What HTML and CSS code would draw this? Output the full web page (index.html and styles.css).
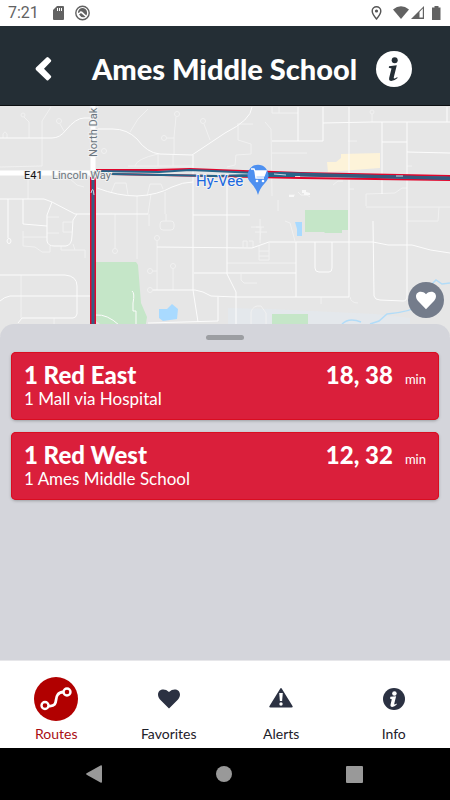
FILE: index.html
```html
<!DOCTYPE html>
<html lang="en">
<head>
<meta charset="utf-8">
<meta name="viewport" content="width=device-width, initial-scale=1">
<title>Ames Middle School</title>
<link rel="stylesheet" href="styles.css">
</head>
<body>
<div class="status">
  <span class="clock">7:21</span>
  <svg class="status-left" width="40" height="16" viewBox="52 5 40 16" aria-hidden="true">
    <path d="M57 6h6q1 0 1 1v12q0 1-1 1h-9q-1 0-1-1v-9z" fill="#626262"/>
    <path d="M57.500 8v3M59.500 8v3M61.500 8v3" stroke="#fff" stroke-width="1"/>
    <circle cx="82.500" cy="13" r="6.700" fill="none" stroke="#626262" stroke-width="1.400"/>
    <path d="M78 13a4.500 4.500 0 0 1 9-1q.3 2-.7 3.500L82 11.500q-2-1-2.500 1z" fill="#626262"/>
    <path d="M79 14.500l2-1.500 4.500 3.800q-4 1.700-6.500-2.300z" fill="#626262"/>
  </svg>
  <svg class="status-right" width="72" height="16" viewBox="371 5 72 16" aria-hidden="true">
    <path d="M377.500 19q-4.300-5-4.300-8a4.300 4.300 0 0 1 8.600 0q0 3-4.300 8z" fill="none" stroke="#555" stroke-width="1.400"/>
    <circle cx="377.500" cy="11" r="1.600" fill="#555"/>
    <path d="M394 9.500q8-6.500 16 0L402 19z" fill="#626262"/>
    <path d="M412 19l13-13v13z" fill="#626262"/><path d="M420.500 12l3.300-3.500v9h-3.300z" fill="#fff"/>
    <path d="M433 7.500h2.500V6h4v1.500h2V20H433z" fill="#626262"/>
  </svg>
</div>

<header class="header">
  <button class="icon-button" aria-label="Back">
    <svg width="18" height="26" viewBox="0 0 18 26"><path d="M11.500 1.500q1-1 2 0l2.300 2.300q1 1 0 2L9 12.800l6.800 7q1 1 0 2l-2.300 2.300q-1 1-2 0L1 14q-1-1.200 0-2.400z" fill="#fff"/></svg>
  </button>
  <h1>Ames Middle School</h1>
  <button class="icon-button" aria-label="Stop information">
    <svg width="36" height="36" viewBox="0 0 36 36"><circle cx="18" cy="18" r="18" fill="#fff"/><circle cx="18.700" cy="9.300" r="3" fill="#242e35"/><path d="M13 15.300l7.800-1.100-3 12.100q-.4 1.700 1 1.200l2.700-1.500-.2 1.200q-3 2.700-6 2.700-2.800 0-2.100-3.200l2.300-9.300-2.700-.7z" fill="#242e35"/></svg>
  </button>
</header>

<main class="main">
  <section class="map" aria-label="Route map">
    <svg class="map-canvas" viewBox="0 106 450 230" preserveAspectRatio="xMidYMin slice">
      <path d="M228 308l42 1 105 5 35 4v18H228z" fill="#e4e8ec"/>
      <path d="M96 262h40l2 3 3 38 6 14-3 19h-28l-20-15z" fill="#c5e6c8"/>
      <path d="M305 210h43v20h-6v3h-17l-1-1h-19zM272 314h36v22h-36z" fill="#c5e6c8"/>
      <path d="M327 162h9l5-4v-4l39-1v15l-52 4z" fill="#fdf3d9"/>
      <path d="M159 309h8l5-5 6 5-1 10-14 2-4-3zM295 222h7v14h-5v-7z" fill="#a9daff"/>
      <g fill="none" stroke="#f1f1f1" stroke-width="1">
        <circle cx="23" cy="115" r="2"/><circle cx="59" cy="121" r="2.500"/><circle cx="177" cy="114" r="2.500"/><circle cx="164" cy="138" r="2.500"/><circle cx="203" cy="121" r="2.500"/><circle cx="104" cy="151" r="2.500"/>
        <circle cx="115" cy="251" r="2.500"/><circle cx="157" cy="238" r="2.500"/><circle cx="150" cy="271" r="2.500"/><circle cx="150" cy="290" r="2.500"/><circle cx="173" cy="266" r="2.500"/><circle cx="372" cy="112" r="2"/>
        <rect x="160" y="221" width="14" height="9" rx="3"/>
        <path d="M3 138v-4q2-4 4 0v4M24 117l5 5v16M60 124l4 7M51 107l-9 14v45l-42 1M148 109l-10 10-8 13M176 117l-2 20v18M167 138h7M204 124l6 16M135 166q1-7 23-12v12M173 155v11M128 166h65M69 178l8 7 7 2M28 176v23M111 193l4-10h11l2 12M147 196l3-12h11l2 5M151 194l-3 20M165 192v22"/>
        <path d="M47 217h12M47 233h12M72 222h-9v10h9M23 231v15l12 1 7 5h8v-6M23 237h24M61 246v4h24v8M73 244l2 6M115 214v34M166 214v7M157 241v49M153 271h4M173 269v21M54 318v8M21 275v43M149 214v12M137 196v63"/>
        <path d="M272 107v6h26M279 107v6M265 122l6 7 1 67M272 153h35M238 125v15l13 4v10l-15 1-1 10-8 2M237 124h16M348 141h9M372 114v8M366 206v-12l29-1 7-5h5M366 207h84M407 221h31l1-14M407 166h5M349 189h5M333 185l5-4h5"/>
        <path d="M227 263h69M256 227h8M260 219v24M251 227h10l-1 13M255 232h12M243 247v-6h4v6M249 241h4v7M259 246v14h10v-17M259 256h10M259 251h10M285 221l5 2 5 18M241 274v6l3 3h13M321 297v7M350 297q1 6 8 6M251 326v-14q2-7 10-6l5 7v13M278 200v11M289 195h6M298 192l3 3h6l3 2"/>
      </g>
      <g fill="none" stroke="#fcfcfc" stroke-width="1">
        <path d="M0 138h52q8 0 14-8 10-12 18-12h9M98 129h15q14 0 24 10 10 14 23 15l32 1 33-22q26-13 27-26M193 155v17M97 188q21 8 40 8 21-1 35-9 11-5 21-5M0 199h44l8 3 23 12h73M8 199v39M23 199v25l24 2M52 202l-5 13v26q1 5 7 5h12q6-1 6-10l1-16 4-6"/>
        <ellipse cx="9" cy="241" rx="2" ry="2.500"/>
        <path d="M0 275h65q12 1 12 11v28q-1 4-4 4H22l-4 5M0 301q4-4 10-5h80M193 172v118l5 32M193 215h57M153 290h42q8 1 16 6l25 1h113M157 247l95 1 17-6h104l15 3h24q18 6 38 8M194 273h102M218 297v24l-70 2M96 315q11-1 23 10M132 291q3 2 1 12v8h3v13M227 180v94l9 18v35"/>
        <path d="M296 242v55M315 242v26q0 4 4 4h10q3 0 3-4v-26M349 107v190M373 221l1 75q1 4 6 4l23 1q4 0 4-5V122M298 107v34M323 107v34h-51M323 123l49-1h78M447 107v15M382 122v72M382 142h25M407 152l43 1"/>
      </g>
      <path d="M289 195h5v2h-5zM302 190h4v2l4 1v2h-6v-2h-2z" fill="#f8f8f8"/>
      <path d="M342 324q7-7 19-2M370 324l9-3 8-7q24-2 36-10M432 284l4-4 6 4 8-1" fill="none" stroke="#b2dcf8" stroke-width="1.500"/>
      <path d="M0 173h95M93 106v70" fill="none" stroke="#fff" stroke-width="5"/>
      <path d="M93 177v159" stroke="#e1062c" stroke-width="6"/>
      <path d="M96 170h60l34-1 110 4 150 3M111 174l100 2 90 2 149 2" fill="none" stroke="#e1062c" stroke-width="2"/>
      <path d="M94 171l65 1 31-2 45 2M111 174l105 2 34-1 30-2 170 5M235 172l65 3 150 4M235 176h60" fill="none" stroke="#26668a" stroke-width="2"/>
      <path d="M300 175l150 3" stroke="#36597d" stroke-width="3"/>
      <path d="M93 172v164" stroke="#345e84" stroke-width="3"/>
      <path d="M91 193q2-8 3 2M274 174l12 1M396 176h7" fill="none" stroke="#c9d9e2" stroke-width="1"/>
      <g class="map-label">
        <text x="24" y="179" class="road-number">E41</text>
        <text x="52" y="179">Lincoln Way</text>
        <text transform="translate(97 157) rotate(-90)">North Dak</text>
        <text x="196" y="186" class="place">Hy-Vee</text>
      </g>
      <path d="M258 195q-2-7-7-12a10.500 10.500 0 1 1 14 0q-5 5-7 12z" fill="#4e90f0"/>
      <path d="M251 169h3l3 7h7l2-5h-11l1 7h8" fill="none" stroke="#fff" stroke-width="1.400"/><path d="M255 171h11l-2 5h-7z" fill="#fff"/>
      <circle cx="257" cy="181" r="1.300" fill="#fff"/><circle cx="263" cy="181" r="1.300" fill="#fff"/>
    </svg>
    <button class="favorite" aria-label="Add to favorites">
      <svg width="20" height="19" viewBox="0 0 22 20"><path d="M11 19.500L2 10.300C-4 2.500 5-3 11 3c6-6 15-.5 9 7.300z" fill="#fff"/></svg>
    </button>
  </section>

  <section class="sheet">
    <div class="handle"></div>
    <a class="card" href="#east">
      <span class="route"><strong>1 Red East</strong><span class="via">1 Mall via Hospital</span></span>
      <span class="arrivals"><strong>18, 38</strong><span class="unit">min</span></span>
    </a>
    <a class="card" href="#west">
      <span class="route"><strong>1 Red West</strong><span class="via">1 Ames Middle School</span></span>
      <span class="arrivals"><strong>12, 32</strong><span class="unit">min</span></span>
    </a>
  </section>
</main>

<nav class="tabs">
  <a class="tab active" href="#routes">
    <span class="tab-icon"><svg width="44" height="44" viewBox="0 0 44 44"><circle cx="22" cy="22" r="22" fill="#b10000"/><g fill="none" stroke="#fff" stroke-width="2.400"><circle cx="11" cy="28.500" r="3.500"/><circle cx="33" cy="15" r="3.500"/><path d="M14.500 29c10 1 6-7 9-11q2-3 6-3" stroke-width="2.800"/></g></svg></span>
    Routes
  </a>
  <a class="tab" href="#favorites">
    <span class="tab-icon"><svg width="22" height="20" viewBox="0 0 22 20"><path d="M11 19.500L2 10.500C-4 2.500 5-3 11 3c6-6 15-.5 9 7.500z" fill="#2b3142"/></svg></span>
    Favorites
  </a>
  <a class="tab" href="#alerts">
    <span class="tab-icon"><svg width="24" height="22" viewBox="0 0 24 22"><path d="M11 1q1-2 2 0l10.500 17q.8 1.500-1 1.500h-21q-1.800 0-1-1.500z" fill="#2b3142"/><path d="M10.200 5h3.600l-.7 8h-2.200z" fill="#fff"/><circle cx="12" cy="16" r="1.700" fill="#fff"/></svg></span>
    Alerts
  </a>
  <a class="tab" href="#info">
    <span class="tab-icon"><svg width="22" height="22" viewBox="0 0 36 36"><circle cx="18" cy="18" r="18" fill="#2b3142"/><circle cx="18.700" cy="9" r="3.700" fill="#fff"/><path d="M12 14.500l9.500-1-3 12q-.4 2 1 1.500l3-1.500-.3 2q-3.500 3.500-7 3.500-3.800 0-2.800-4l2-8.500-2.800-.8z" fill="#fff"/></svg></span>
    Info
  </a>
</nav>

<div class="system">
  <button aria-label="System back"><svg width="16" height="18" viewBox="0 0 16 18"><path d="M.6 8.300L14.500.5q1.500-.7 1.500 1v15q0 1.700-1.500 1L.6 9.700q-1-.7 0-1.400z" fill="#999"/></svg></button>
  <button aria-label="Home"><svg width="16" height="16" viewBox="0 0 16 16"><circle cx="8" cy="8" r="8" fill="#999"/></svg></button>
  <button aria-label="Recent apps"><svg width="17" height="17" viewBox="0 0 17 17"><rect width="17" height="17" rx="1" fill="#999"/></svg></button>
</div>
</body>
</html>
```

FILE: styles.css
```css
* {
  box-sizing: border-box;
}

body {
  margin: 0;
  min-height: 100vh;
  display: flex;
  flex-direction: column;
  background: #fff;
  color: #1d2029;
  font-family: Lato, "Liberation Sans", sans-serif;
}

button {
  padding: 0;
  border: 0;
  background: none;
  cursor: pointer;
}

a {
  color: inherit;
  text-decoration: none;
}

svg {
  display: block;
}

.status {
  display: flex;
  align-items: center;
  height: 26px;
  padding: 0 8px;
  color: #626262;
}

.clock {
  width: 44px;
  font: 16px/28px Roboto, sans-serif;
}

.status-right {
  margin-left: auto;
}

.header {
  display: flex;
  align-items: center;
  justify-content: space-between;
  height: 80px;
  padding: 6px 38px 0 35px;
  background: #242e35;
  border-bottom: 1px solid #0c0f11;
}

.header h1 {
  margin: 0 0 0 20px;
  color: #fff;
  font-size: 29px;
  font-weight: 900;
  line-height: 36px;
}

.main {
  flex: 1;
  display: flex;
  flex-direction: column;
}

.map {
  position: relative;
  height: 230px;
  overflow: hidden;
  background: #e6e6e6;
}

.map-canvas {
  width: 100%;
  height: 100%;
}

.map-label {
  font: 11px Roboto, sans-serif;
  fill: #6c7780;
  stroke: #f1f1f1;
  stroke-width: 2px;
  paint-order: stroke;
}

.road-number {
  fill: #111;
}

.place {
  font-size: 15px;
  fill: #1967e0;
}

.favorite {
  position: absolute;
  right: 6px;
  bottom: 18px;
  display: grid;
  place-items: center;
  width: 36px;
  height: 36px;
  border-radius: 50%;
  background: #747c8b;
}

.sheet {
  position: relative;
  flex: 1;
  display: flex;
  flex-direction: column;
  gap: 12px;
  margin-top: -12px;
  padding: 11px;
  border-radius: 14px 14px 0 0;
  background: #d4d5db;
}

.handle {
  align-self: center;
  width: 38px;
  height: 5px;
  border-radius: 3px;
  background: #9c9ea2;
}

.card {
  display: flex;
  justify-content: space-between;
  align-items: flex-start;
  height: 68px;
  padding: 9px 13px;
  border-radius: 5px;
  background: #da1f3b;
  color: #fff;
  box-shadow: inset 0 0 0 1px #d90d20, 0 1px 3px #9c9ea2;
}

.card strong {
  font-size: 24px;
  font-weight: 900;
  line-height: 28px;
}

.route {
  display: flex;
  flex-direction: column;
}

.via {
  font-size: 17px;
  line-height: 20px;
}

.arrivals {
  display: flex;
  align-items: baseline;
  gap: 12px;
}

.unit {
  font-size: 13px;
}

.tabs {
  display: grid;
  grid-template-columns: repeat(4, 1fr);
  height: 88px;
  padding-top: 16px;
  border-top: 1px solid #e7e7ea;
}

.tab {
  display: flex;
  flex-direction: column;
  align-items: center;
  gap: 3px;
  font-size: 14px;
  line-height: 20px;
}

.tab-icon {
  display: grid;
  place-items: center;
  height: 44px;
}

.active {
  color: #a90d12;
}

.system {
  display: flex;
  justify-content: space-between;
  align-items: center;
  height: 52px;
  padding: 0 87px 0 86px;
  background: #000;
}
```
